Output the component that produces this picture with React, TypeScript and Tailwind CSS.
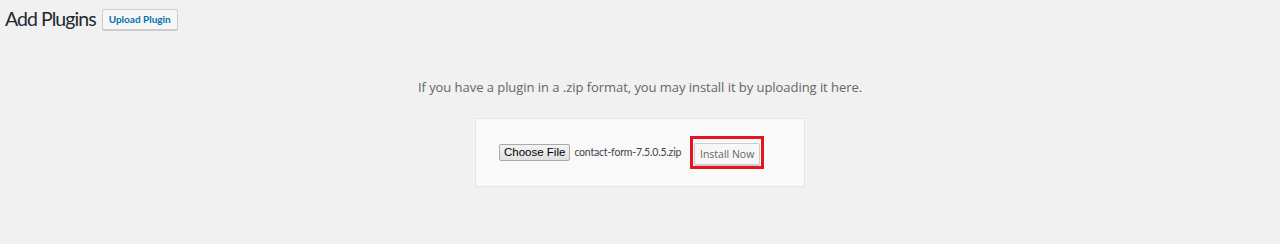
export default function App() {
  return (
    <div className="min-h-[244px] bg-[#f1f1f1] font-['Open_Sans',sans-serif] text-[#444]">
      {/* Page title row */}
      <div className="flex items-center pl-[5px] pt-[7px]">
        <h1 className="text-[19.5px] leading-[24px] font-normal text-[#23282d] font-['Lato',sans-serif] tracking-[-0.95px]">
          Add Plugins
        </h1>
        <button className="ml-[6px] h-[21px] px-[6px] border border-[#cccccc] bg-[#f7f7f7] rounded-[2px] text-[10px] font-bold text-[#0073aa] font-['Lato',sans-serif] leading-none shadow-[0_1px_0_#ccc]">
          Upload Plugin
        </button>
      </div>

      {/* Upload description */}
      <p className="mt-[47px] text-center text-[13px] leading-[18px] text-[#666] tracking-[-0.05px]">
        If you have a plugin in a .zip format, you may install it by uploading
        it here.
      </p>

      {/* Upload form */}
      <div className="mx-auto mt-[22px] w-[330px] h-[69px] bg-[#f9f9f9] border border-[#e5e5e5] flex items-center pl-[23px]">
        <button className="h-[17px] px-[4px] border border-[#a9a9a9] rounded-[2px] bg-gradient-to-b from-[#f3f3f3] to-[#e1e1e1] text-[11.5px] leading-none text-black font-['Liberation_Sans',sans-serif]">
          Choose File
        </button>
        <span className="ml-[4px] text-[10.5px] text-[#444] font-['Lato',sans-serif] tracking-[-0.2px]">
          contact-form-7.5.0.5.zip
        </span>
        <div className="ml-[9px] border-[3px] border-[#e5151f] p-px">
          <button className="h-[22px] w-[66px] border border-[#cccccc] rounded-[2px] bg-[#f7f7f7] shadow-[0_1px_0_#ccc] text-[10.5px] text-[#666] leading-none">
            Install Now
          </button>
        </div>
      </div>
    </div>
  );
}
